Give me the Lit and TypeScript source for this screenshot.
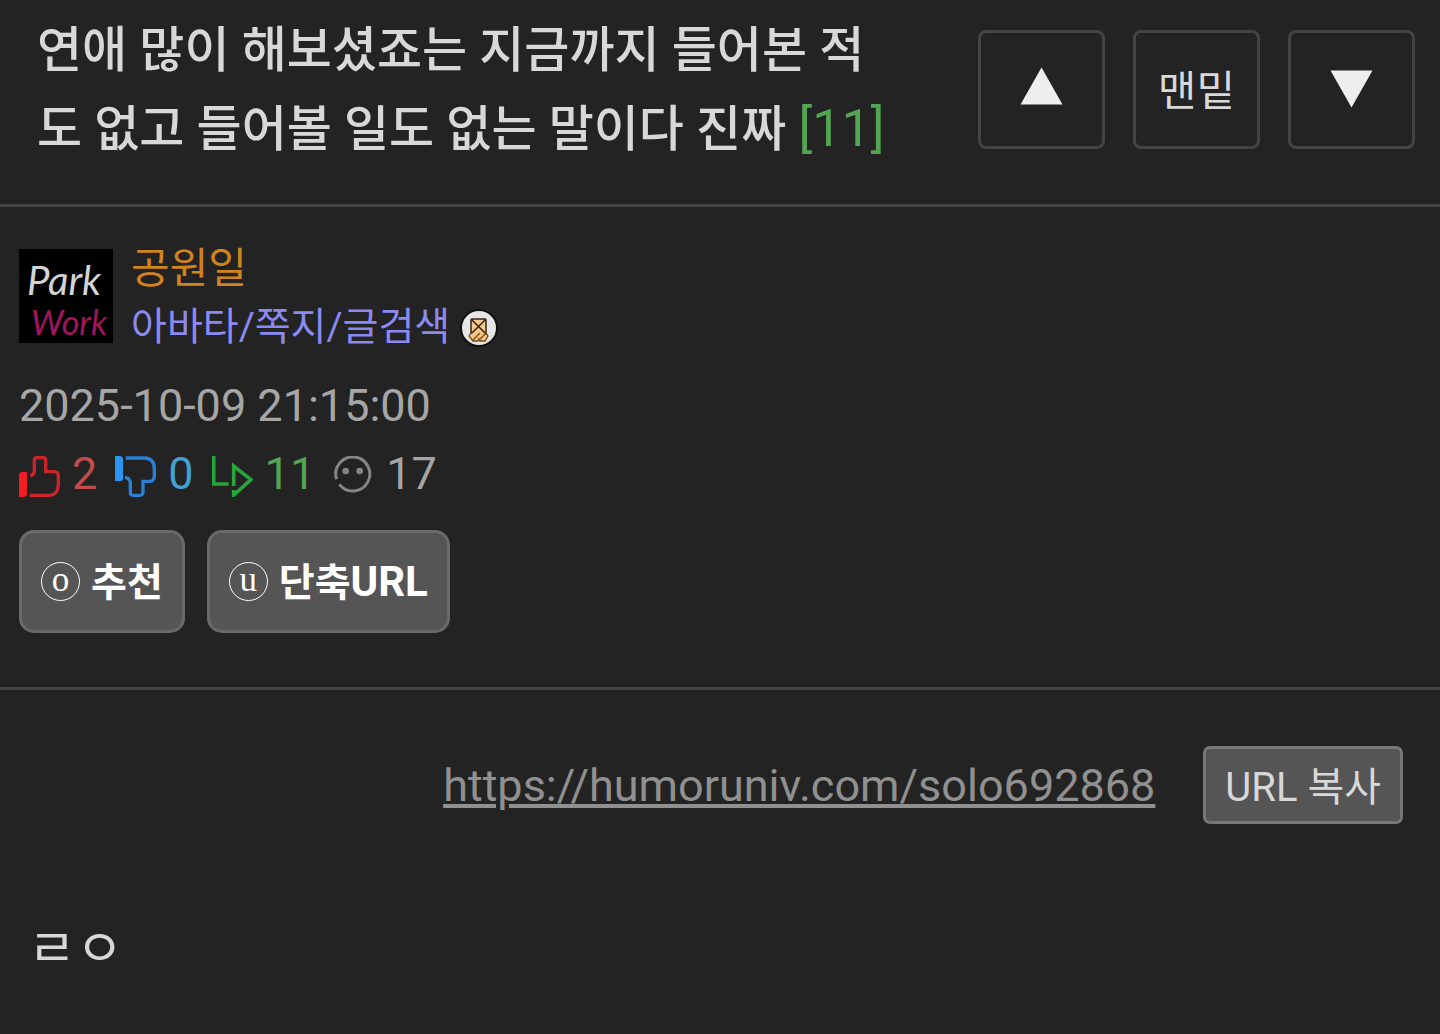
import { LitElement, html, css } from "lit";
import { customElement } from "lit/decorators.js";

@customElement("app-root")
class AppRoot extends LitElement {
  static styles = css`
    :host {
      display: block;
      min-height: 100vh;
      background: #232323;
      color: #d8d8d8;
      font-family: Roboto, "Noto Sans CJK KR", sans-serif;
    }
    * {
      box-sizing: border-box;
    }
    svg {
      display: block;
      flex: none;
    }
    a {
      color: inherit;
      text-decoration: none;
    }
    button {
      margin: 0;
      font-family: inherit;
      color: inherit;
      cursor: pointer;
    }
    .head {
      display: flex;
      align-items: center;
      padding: 11px 25px 35px 37px;
      border-bottom: 3px solid #444;
    }
    .title {
      flex: 1;
      margin: 0;
      padding-right: 80px;
      font-size: 49px;
      line-height: 79px;
      font-weight: 500;
    }
    .count {
      color: #53a553;
      font-size: 52px;
      line-height: 1;
      font-weight: 400;
    }
    .nav {
      display: flex;
      gap: 28px;
      margin-bottom: 2px;
    }
    .nav button {
      display: flex;
      align-items: center;
      justify-content: center;
      width: 127px;
      height: 119px;
      padding: 0 0 4px;
      border: 3px solid #444;
      border-radius: 8px;
      background: none;
      font-size: 42px;
    }
    .meta {
      padding: 32px 19px 54px;
      border-bottom: 3px solid #444;
    }
    .author {
      display: flex;
      align-items: center;
      gap: 18px;
      margin-bottom: 15px;
    }
    .avatar {
      margin-bottom: 4px;
    }
    .name {
      display: block;
      color: #d0831e;
      font-size: 42px;
      line-height: 59px;
    }
    .tools {
      display: flex;
      align-items: center;
      gap: 10px;
      color: #8a8af0;
      font-size: 39px;
      line-height: 59px;
    }
    .date {
      display: block;
      color: #a6a6a6;
      font-size: 45px;
      line-height: 68px;
    }
    .stats {
      display: flex;
      gap: 18px;
      margin: 0;
      padding: 0;
      list-style: none;
      font-size: 45px;
      line-height: 68px;
    }
    .stats li {
      display: flex;
      align-items: center;
      gap: 12px;
    }
    .stats svg {
      margin-top: 4px;
    }
    .up { color: #c04c4c; }
    .down { color: #43a0d0; }
    .reply { color: #53a553; }
    .view { color: #a6a6a6; }
    .actions {
      display: flex;
      gap: 22px;
      margin-top: 22px;
    }
    .actions button {
      display: flex;
      align-items: center;
      gap: 11px;
      height: 103px;
      padding: 0 19px;
      border: 3px solid #6a6a6a;
      border-radius: 15px;
      background: #555;
      color: #fff;
      font-size: 39px;
      line-height: 57px;
      font-weight: 700;
    }
    .mark {
      display: flex;
      align-items: center;
      justify-content: center;
      width: 39px;
      height: 39px;
      padding-bottom: 4px;
      border: 1px solid #fff;
      border-radius: 50%;
      font-family: "Liberation Serif", serif;
      font-size: 35px;
      line-height: 35px;
      font-weight: 400;
    }
    .label {
      padding-top: 4px;
    }
    .latin {
      font-size: 42px;
      line-height: 1;
    }
    .share {
      display: flex;
      align-items: center;
      justify-content: flex-end;
      gap: 48px;
      padding: 56px 37px 0;
    }
    .link {
      color: #909090;
      font-size: 45px;
      text-decoration: underline;
    }
    .copy {
      height: 78px;
      padding: 0 19px 3px;
      border: 3px solid #777;
      border-radius: 7px;
      background: #555;
      font-size: 40px;
    }
    .body {
      margin: 0;
      padding: 86px 28px;
      font-size: 52px;
      line-height: 79px;
    }
  `;

  render() {
    return html`
      <header class="head">
        <h1 class="title">
          연애 많이 해보셨죠는 지금까지 들어본 적도 없고 들어볼 일도 없는 말이다 진짜
          <span class="count">[11]</span>
        </h1>
        <nav class="nav">
          <button aria-label="위로">
            <svg width="43" height="43" viewBox="0 0 43 43"><path d="M21.500 1.500L42.500 38.500H.5z" fill="#eee" /></svg>
          </button>
          <button>맨밑</button>
          <button aria-label="아래로">
            <svg width="43" height="43" viewBox="0 0 43 43"><path d="M.5 4.500H42.500L21.500 41.500z" fill="#eee" /></svg>
          </button>
        </nav>
      </header>

      <section class="meta">
        <div class="author">
          <svg class="avatar" width="94" height="94" viewBox="0 0 94 94" role="img" aria-label="Park Work">
            <rect width="94" height="94" />
            <g font-family="Lato" font-style="italic">
              <text x="8" y="46" font-size="40" fill="#d4d4d4">Park</text>
              <text x="12" y="86" font-size="34" fill="#a3155c">Work</text>
            </g>
          </svg>
          <div>
            <a class="name" href="#">공원일</a>
            <div class="tools">
              <a href="#">아바타/쪽지/글검색</a>
              <svg width="38" height="38" viewBox="0 0 38 38">
                <circle cx="19" cy="19" r="18" fill="#e6e6e6" stroke="#111" stroke-width="2" />
                <path d="M11 11h15v12l2 3-3 6h-5l-1-1-2 1h-4l-4-4 2-5z" fill="#f3c88a" />
                <path d="M11 25V11q0-1 1-1h13q1 0 1 1v13M12 11l13 13M25 11L12 24" fill="none" stroke="#33220f" stroke-width="1.500" />
                <path d="M11 24l-2 3 4 5h5l8-8 2 3-3 5h-5l-2-3M20 24l-7 7" fill="none" stroke="#7a4a10" stroke-width="1.300" />
              </svg>
            </div>
          </div>
        </div>

        <time class="date" datetime="2025-10-09T21:15:00">2025-10-09 21:15:00</time>
        <ul class="stats">
          <li class="up">
            <svg width="41" height="41" viewBox="0 0 123 123">
              <path d="M0 58Q0 48 9 48H24V115Q22 123 12 123H0z" fill="#f21d22" />
              <path d="M34 60Q46 56 46 46V12Q46 5 53 5H73Q80 5 80 12V47H104Q118 47 118 60V88Q116 117 92 118H32" fill="none" stroke="#c9262b" stroke-width="10" />
            </svg>
            2
          </li>
          <li class="down">
            <svg width="41" height="41" viewBox="0 0 123 123">
              <path d="M0 0H12Q24 0 24 10V68Q23 75 14 75H0z" fill="#2a95f3" />
              <path d="M32 6H90Q118 8 118 38V60Q118 76 103 76H84V110Q83 118 74 118H54Q46 117 46 110V80Q44 66 30 64" fill="none" stroke="#2b7fd4" stroke-width="10" />
            </svg>
            0
          </li>
          <li class="reply">
            <svg width="41" height="41" viewBox="0 0 123 123">
              <path d="M5 0V84H50M65 90V30L117 71L65 117V102" fill="none" stroke="#27a53b" stroke-width="11" />
            </svg>
            11
          </li>
          <li class="view">
            <svg width="41" height="41" viewBox="0 0 123 123">
              <path d="M11 70A51 51 0 1 1 19 85" fill="none" stroke="#858585" stroke-width="9" />
              <circle cx="38" cy="45" r="10" fill="#858585" />
              <circle cx="80" cy="45" r="10" fill="#858585" />
            </svg>
            17
          </li>
        </ul>

        <div class="actions">
          <button><span class="mark">o</span><span class="label">추천</span></button>
          <button><span class="mark">u</span><span class="label">단축<span class="latin">URL</span></span></button>
        </div>
      </section>

      <div class="share">
        <a class="link" href="https://humoruniv.com/solo692868">https://humoruniv.com/solo692868</a>
        <button class="copy">URL 복사</button>
      </div>
      <p class="body">ㄹㅇ</p>
    `;
  }
}
